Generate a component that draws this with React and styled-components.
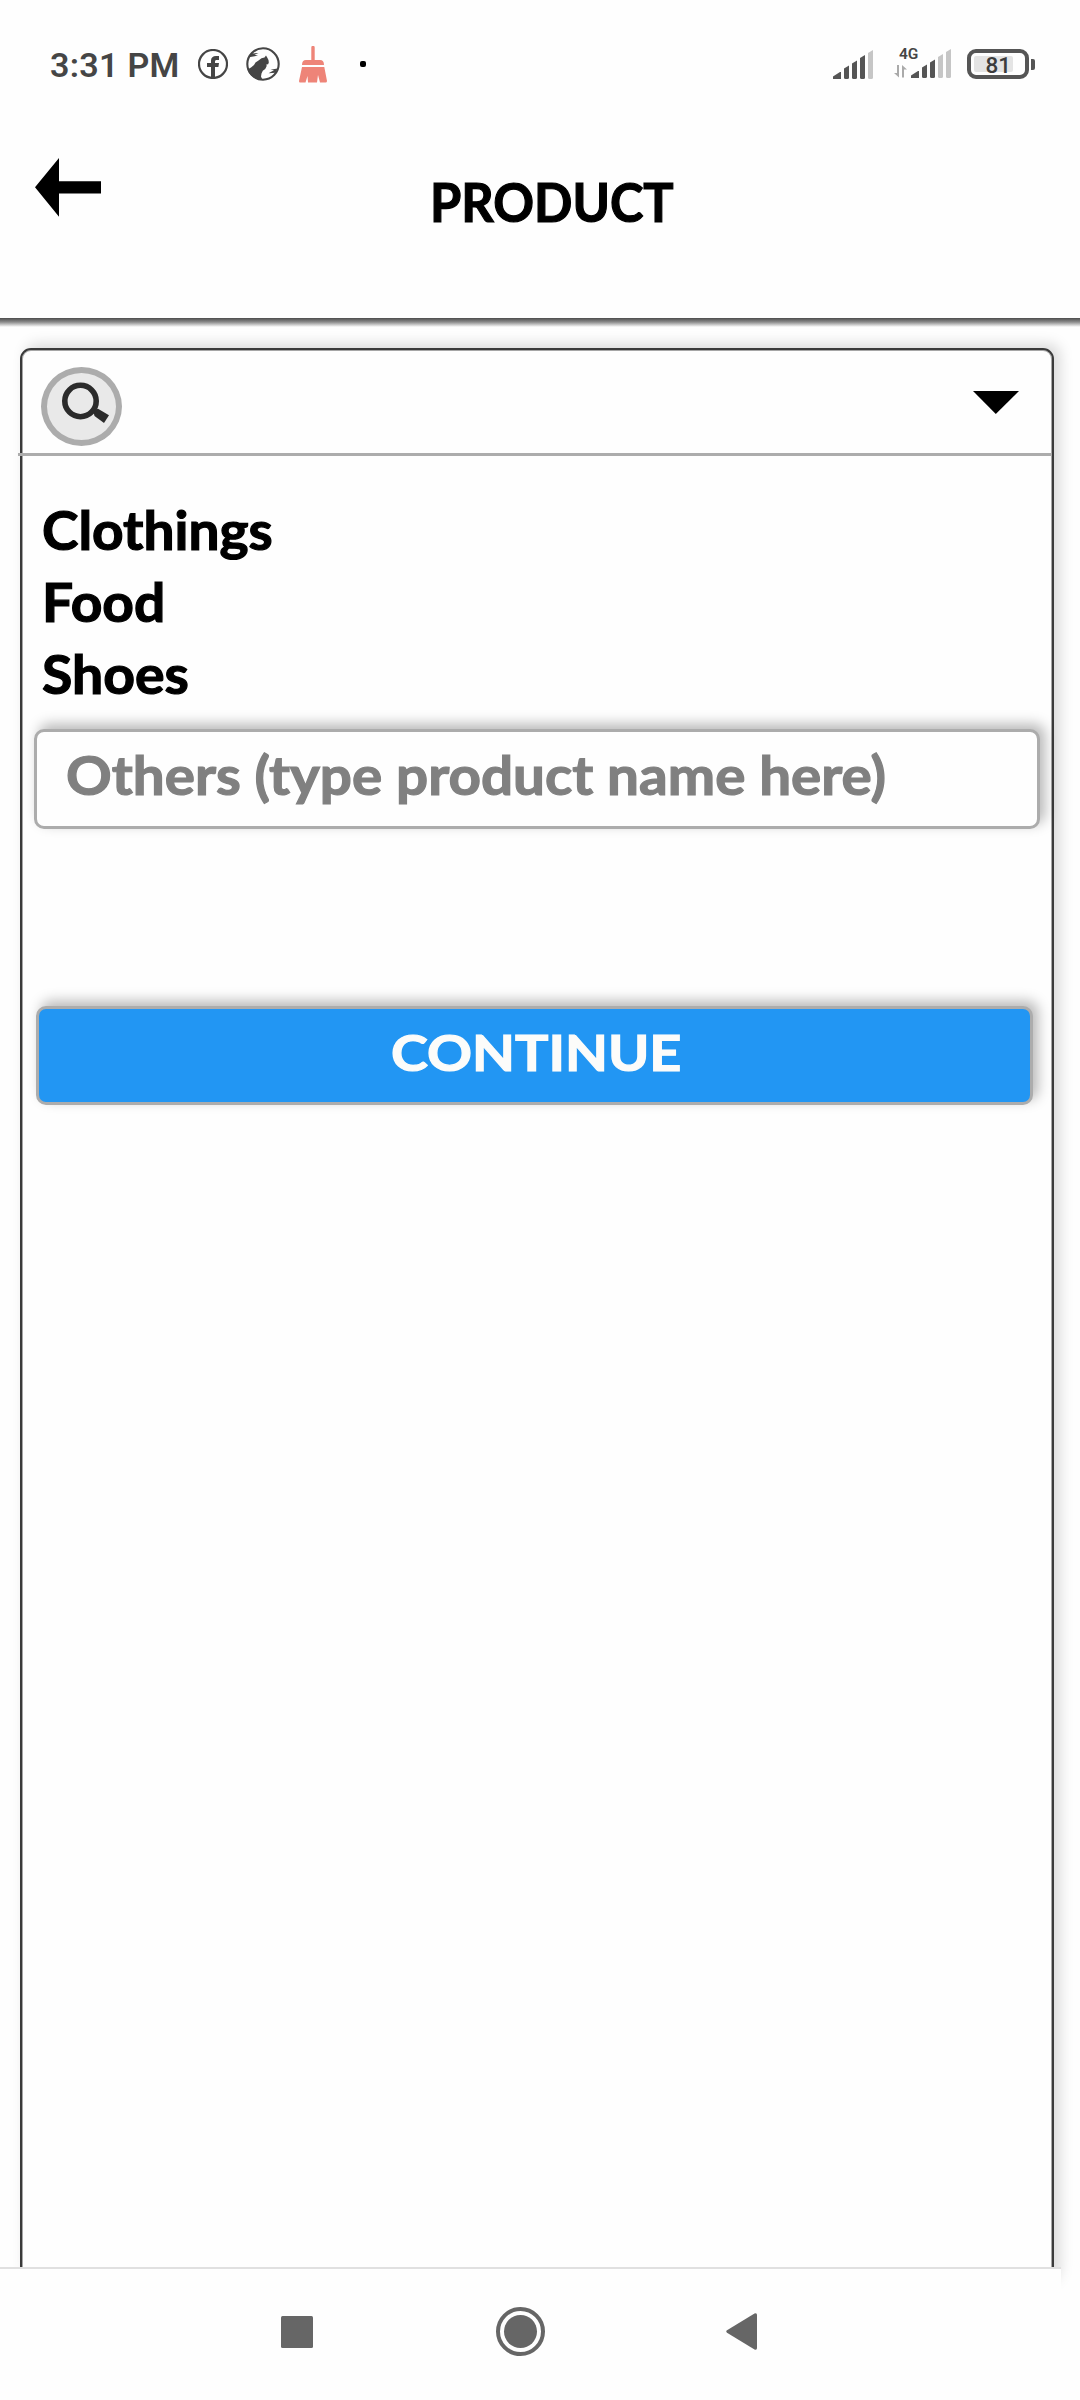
import React from "react";
import styled, { createGlobalStyle } from "styled-components";

const GlobalStyle = createGlobalStyle`
  *, *::before, *::after { box-sizing: border-box; }
  html, body { margin: 0; padding: 0; background: #fefefe; }
`;

const ink = "#454545";
const softLine = "#acacac";

const Screen = styled.div`
  width: 1080px;
  height: 2400px;
  overflow: hidden;
  display: flex;
  flex-direction: column;
  background: #fefefe;
  color: #000;
  font-family: Lato, "Open Sans", sans-serif;
  font-weight: 700;
`;

const StatusBar = styled.div`
  height: 128px;
  flex: none;
  display: flex;
  align-items: flex-start;
  justify-content: space-between;
  padding: 44px 45px 0 50px;
  font-family: Roboto, sans-serif;
  color: ${ink};
`;

const StatusGroup = styled.div`
  display: flex;
  align-items: center;
  height: 40px;
`;

const Clock = styled.span`
  width: 148px;
  padding-top: 2px;
  font-size: 34px;
  font-weight: 600;
  line-height: 40px;
  letter-spacing: 0.3px;
  white-space: nowrap;
`;

const Glyph = styled.svg`
  display: block;
  flex: none;
  margin-left: ${(p) => p.$gap || 0}px;
`;

const Network = styled.div`
  display: grid;
  grid-template-columns: 17px 42px;
  grid-template-rows: 12px 20px;
  margin-left: 20px;
`;

const NetworkType = styled.span`
  grid-column: 1 / 3;
  grid-row: 1;
  padding-left: 5px;
  font-size: 15.5px;
  font-weight: 600;
  line-height: 12px;
`;

const NetworkArrows = styled(Glyph)`
  grid-column: 1;
  grid-row: 2;
  margin-top: 5px;
`;

const NetworkBars = styled(Glyph)`
  grid-column: 2;
  grid-row: 1 / 3;
  margin-top: 1px;
`;

const Battery = styled.div`
  width: 62px;
  height: 30px;
  margin-left: 14px;
  border: 4px solid #555;
  border-radius: 9px;
  padding: 3px;
  display: flex;
`;

const BatteryLevel = styled.div`
  width: 39px;
  height: 16px;
  border-radius: 2px;
  background: #e4e4e4;
  display: flex;
  align-items: center;
  justify-content: flex-end;
  padding: 2px 2px 0 0;
  font-size: 22.5px;
  font-weight: 500;
  line-height: 16px;
  color: #3c3c3c;
`;

const BatteryTip = styled.span`
  width: 4px;
  height: 11px;
  margin-left: 2px;
  border-radius: 0 2px 2px 0;
  background: #555;
`;

const Header = styled.header`
  height: 190px;
  flex: none;
  display: flex;
  align-items: flex-start;
  padding: 30px 0 0 35px;
`;

const BackButton = styled.button`
  padding: 0;
  border: 0;
  background: none;
  width: 67px;
  height: 59px;
`;

const Title = styled.h1`
  margin: 7px 0 0 327.500px;
  font-size: 53.5px;
  font-weight: 700;
  line-height: 72px;
`;

const HeaderRule = styled.div`
  height: 9px;
  flex: none;
  background: linear-gradient(#4c4c4c, #8c8c8c 45%, #fefefe);
`;

const Panel = styled.main`
  width: 1034px;
  height: 1937px;
  flex: none;
  margin: 21px 0 0 20px;
  border: 2px solid #3a3a3a;
  border-radius: 11px;
  background: #fefefe;
  box-shadow: 6px -4px 14px rgba(0, 0, 0, 0.15), inset 0 0 0 1px #a6a6a6;
`;

const SearchRow = styled.div`
  height: 106px;
  margin-left: -4px;
  padding: 17px 33px 0 23px;
  display: flex;
  justify-content: space-between;
  border-bottom: 3px solid ${softLine};
`;

const SearchBadge = styled.button`
  width: 81px;
  height: 79px;
  padding: 0;
  border: 6px solid ${softLine};
  border-radius: 50%;
  background: #e9e9e9;
`;

const OptionList = styled.ul`
  list-style: none;
  margin: 0;
  padding: 37px 0 0 20px;
`;

const Option = styled.li`
  height: 72px;
  font-size: 53.5px;
  line-height: 72px;
  white-space: nowrap;
`;

const Fit = styled.span`
  display: inline-block;
  white-space: nowrap;
  transform: scaleX(${(p) => p.$stretch});
  transform-origin: ${(p) => p.$origin || "left"};
  -webkit-text-stroke: 1.2px currentColor;
`;

const OtherField = styled.div`
  width: 1006px;
  height: 100px;
  margin: 20px 0 0 12px;
  padding: 6px 0 0 28.500px;
  border: 3px solid ${softLine};
  border-radius: 10px;
  background: #fefefe;
  box-shadow: 5px -5px 13px rgba(0, 0, 0, 0.28);
  color: #808080;
  font-size: 53.5px;
  line-height: 72px;
`;

const ContinueButton = styled.button`
  display: block;
  width: 997px;
  height: 99px;
  margin: 177px 0 0 14px;
  padding: 0 0 7px 4px;
  border: 3px solid ${softLine};
  border-radius: 10px;
  background: #2296f3;
  box-shadow: 5px -5px 13px rgba(0, 0, 0, 0.28);
  color: #fcfcfa;
  font-family: inherit;
  font-size: 50px;
  font-weight: 700;
  line-height: 72px;
`;

const NavBar = styled.nav`
  position: relative;
  width: 1061px;
  height: 133px;
  flex: none;
  margin-top: -18px;
  padding: 38px 0 0 281px;
  border-top: 2px solid #e0e0e0;
  background: #fefefe;
  display: flex;
  align-items: flex-start;
`;

const NavGlyphs = styled.div`
  display: flex;
  align-items: center;
  height: 49px;
`;

function ClockIcons() {
  return (
    <>
      <Glyph width="30" height="30" viewBox="0 0 30 30">
        <circle cx="15" cy="15" r="14" fill="none" stroke={ink} strokeWidth="2.2" />
        <path d="M13 29V18H9v-4h4v-2.500C13 8.500 15 7 18 7h3v4h-2.200c-1.300 0-1.800.6-1.800 1.700V14h4l-.6 4H17v11z" fill={ink} />
      </Glyph>
      <Glyph $gap={18} width="34" height="34" viewBox="0 0 34 34">
        <circle cx="17" cy="17" r="15.700" fill="none" stroke={ink} strokeWidth="2.100" />
        <path d="M1.500 22.500L5 20.500 8 18 9.500 15.500 12.500 13.500 15.500 11.200 18.500 10.500 20 8.500 21.200 10.500 22.500 13 22.800 15.500 22 17.500 20.700 17 20.500 19.500 19.200 22 16.800 23.800 15.500 26.500 15 29.500 16.500 33C9 32.500 3.500 28.500 1.500 22.500z" fill={ink} />
        <path d="M5 6.500l7.500-.4-4 1.600 3.500 1L3 10.200zM31.500 21.500l-7 1.200 3.500.6-5.500 2.900 7-.4z" fill={ink} />
      </Glyph>
      <Glyph $gap={19} width="28" height="37" viewBox="0 0 28 37">
        <path d="M12.300 1.500a1.700 1.700 0 0 1 3.400 0V14H21q4 0 4 5H3q0-5 4-5h5.300zM3 21h22.300L28 35q0 1.500-1.500 1.500H21L19 29l-1 7.500H9L8.500 30 6.500 36.500H1q-1 0-1-1.500z" fill="#ee8478" />
      </Glyph>
      <Glyph $gap={33} width="6" height="6" viewBox="0 0 6 6">
        <rect width="6" height="6" rx="2" fill="#000" />
      </Glyph>
    </>
  );
}

const barPaths = [
  "M0 29v-2.500L7 22h1v7z",
  "M11 18.500l5-3V27.500q0 1.500-1.500 1.500h-2Q11 29 11 27.500z",
  "M19 13.500l5-3V27.500q0 1.500-1.500 1.500h-2Q19 29 19 27.500z",
  "M27 8l5-3V27.500q0 1.500-1.500 1.500h-2Q27 29 27 27.500z",
  "M35 3l5-3V27.500q0 1.500-1.500 1.500h-2Q35 29 35 27.500z",
];

function Bars({ level }) {
  return barPaths.map((d, i) => <path key={d} d={d} fill={i < level ? "#555" : "#c6c6c6"} />);
}

const options = [
  { name: "Clothings", stretch: 1.028 },
  { name: "Food", stretch: 1.03 },
  { name: "Shoes", stretch: 1.035 },
];

export default function App() {
  return (
    <Screen>
      <GlobalStyle />
      <StatusBar>
        <StatusGroup>
          <Clock>3:31 PM</Clock>
          <ClockIcons />
        </StatusGroup>
        <StatusGroup>
          <Glyph width="41" height="29" viewBox="0 0 41 29">
            <Bars level={4} />
          </Glyph>
          <Network>
            <NetworkType>4G</NetworkType>
            <NetworkArrows width="13" height="13" viewBox="0 0 13 13">
              <path d="M0 8h3V0h2v12.500zM13 4.500h-3V12.500H8V0z" fill="#aaa" />
            </NetworkArrows>
            <NetworkBars width="41" height="29" viewBox="0 0 41 29">
              <Bars level={3} />
            </NetworkBars>
          </Network>
          <Battery>
            <BatteryLevel>81</BatteryLevel>
          </Battery>
          <BatteryTip />
        </StatusGroup>
      </StatusBar>

      <Header>
        <BackButton aria-label="Back">
          <Glyph width="67" height="59" viewBox="0 0 67 59">
            <path d="M0 29.300L24 0V23.300H66V35.500H24V58.800z" fill="#000" />
          </Glyph>
        </BackButton>
        <Title>
          <Fit $stretch={0.944}>PRODUCT</Fit>
        </Title>
      </Header>
      <HeaderRule />

      <Panel>
        <SearchRow>
          <SearchBadge aria-label="Search">
            <Glyph width="69" height="67" viewBox="0 0 69 67">
              <circle cx="33.500" cy="28" r="15.700" fill="none" stroke="#2b2b2b" strokeWidth="5.600" />
              <path d="M46 37.500l5-1.800 11 6.600-5 7.700-9.500-7z" fill="#2b2b2b" />
            </Glyph>
          </SearchBadge>
          <Glyph width="46" height="49" viewBox="0 0 46 49">
            <path d="M0 24H46L22.800 47z" fill="#000" />
          </Glyph>
        </SearchRow>
        <OptionList>
          {options.map((o) => (
            <Option key={o.name}>
              <Fit $stretch={o.stretch}>{o.name}</Fit>
            </Option>
          ))}
        </OptionList>
        <OtherField>
          <Fit $stretch={1.058}>Others (type product name here)</Fit>
        </OtherField>
        <ContinueButton>
          <Fit $stretch={1.115} $origin="center">CONTINUE</Fit>
        </ContinueButton>
      </Panel>

      <NavBar>
        <NavGlyphs>
          <Glyph width="32" height="32" viewBox="0 0 32 32">
            <rect width="32" height="32" rx="1.500" fill="#666" />
          </Glyph>
          <Glyph $gap={183} width="49" height="49" viewBox="0 0 49 49">
            <circle cx="24.500" cy="24.500" r="22.500" fill="none" stroke="#666" strokeWidth="4" />
            <circle cx="24.500" cy="24.500" r="16.500" fill="#666" />
          </Glyph>
          <Glyph $gap={181} width="31" height="37" viewBox="0 0 31 37">
            <path d="M1 17.300L28.500.5Q31-.5 31 2V35q0 2.500-2.500 1.500L1 19.700Q-.5 18.500 1 17.300z" fill="#666" />
          </Glyph>
        </NavGlyphs>
      </NavBar>
    </Screen>
  );
}
